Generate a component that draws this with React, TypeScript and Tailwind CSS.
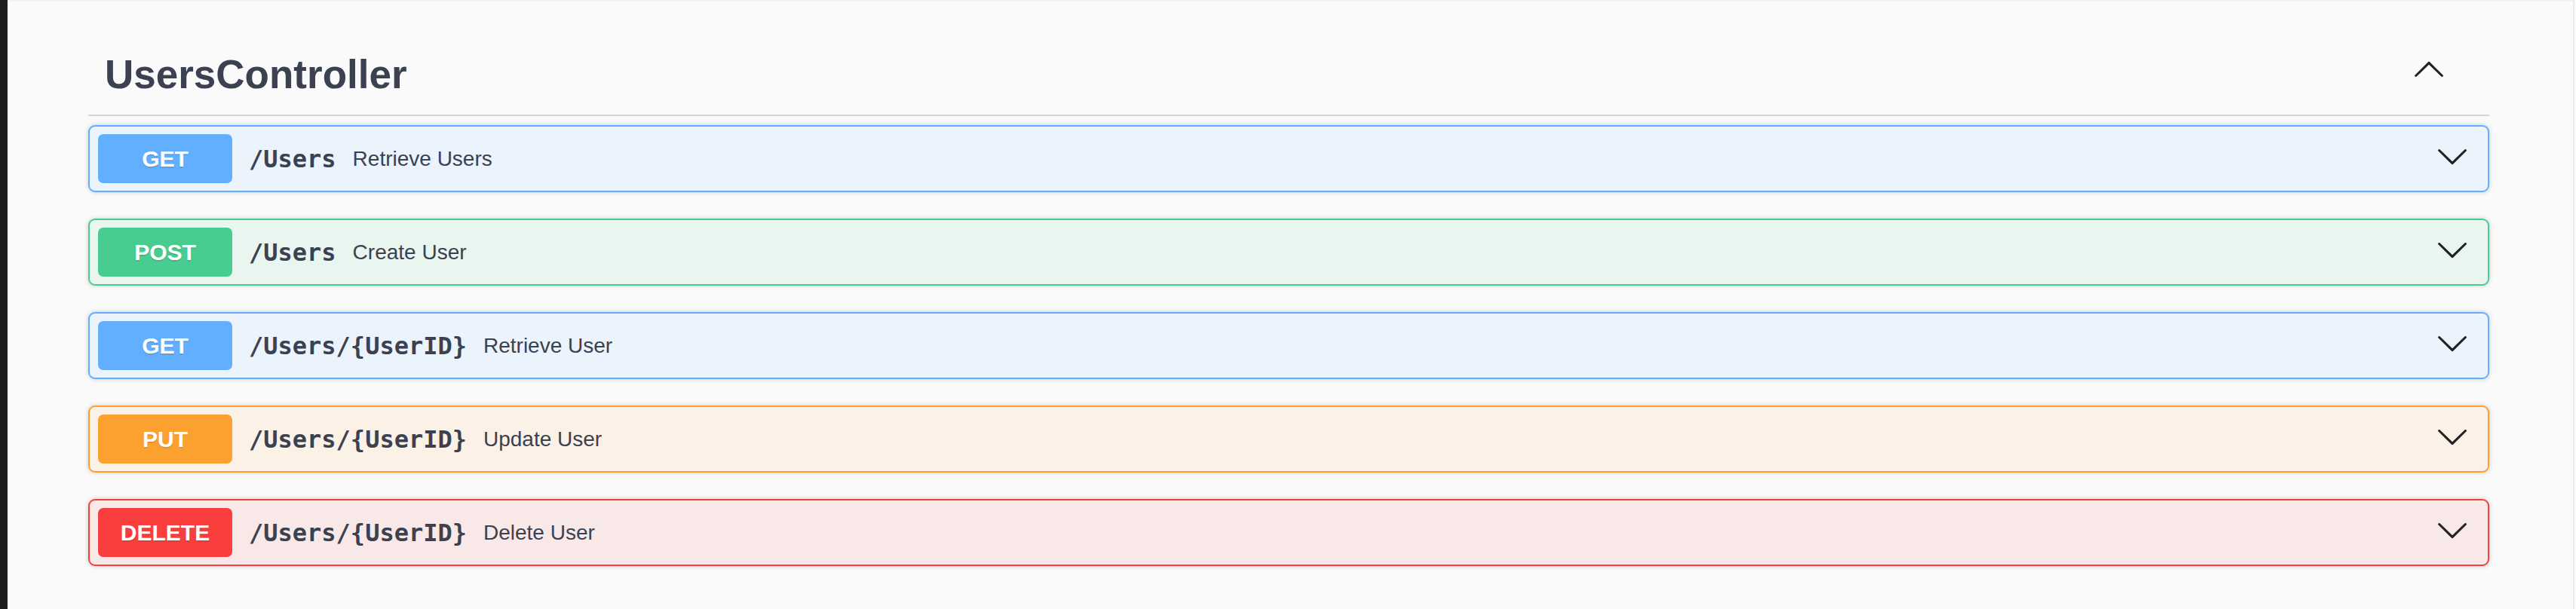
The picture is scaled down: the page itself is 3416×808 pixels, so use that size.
import React from "react";

type Op = {
  method: string;
  path: string;
  desc: string;
  rowCls: string;
  badgeCls: string;
};

const ops: Op[] = [
  {
    method: "GET",
    path: "/Users",
    desc: "Retrieve Users",
    rowCls: "bg-[#ebf3fc] border-[#61affe]",
    badgeCls: "bg-[#61affe]",
  },
  {
    method: "POST",
    path: "/Users",
    desc: "Create User",
    rowCls: "bg-[#e8f6ef] border-[#49cc90]",
    badgeCls: "bg-[#49cc90]",
  },
  {
    method: "GET",
    path: "/Users/{UserID}",
    desc: "Retrieve User",
    rowCls: "bg-[#ebf3fc] border-[#61affe]",
    badgeCls: "bg-[#61affe]",
  },
  {
    method: "PUT",
    path: "/Users/{UserID}",
    desc: "Update User",
    rowCls: "bg-[#fbf1e6] border-[#fca130]",
    badgeCls: "bg-[#fca130]",
  },
  {
    method: "DELETE",
    path: "/Users/{UserID}",
    desc: "Delete User",
    rowCls: "bg-[#f9e8e8] border-[#f93e3e]",
    badgeCls: "bg-[#f93e3e]",
  },
];

const Arrow = ({ up = false }: { up?: boolean }) => (
  <svg
    width="44"
    height="44"
    viewBox="0 0 20 20"
    className={up ? "rotate-180" : ""}
    fill="#222"
  >
    <path d="M17.418 6.109c.272-.268.709-.268.979 0s.271.701 0 .969l-7.908 7.83c-.27.268-.707.268-.979 0l-7.908-7.83c-.27-.268-.27-.701 0-.969.271-.268.709-.268.979 0L10 13.25l7.418-7.141z" />
  </svg>
);

export default function App() {
  return (
    <div className="w-[3416px] h-[808px] bg-[#fafafa] flex font-['Liberation_Sans',Arial,sans-serif]">
      <div className="w-[10px] h-full bg-[#1e1e1e] shrink-0" />
      <div className="flex-1 flex flex-col pl-[107px] pr-[111px] pt-[44px] border-t-2 border-[#f2f2f2]">
        <div className="h-[108px] flex items-center justify-between border-b-2 border-[#d4d5d8] pl-[22px] pr-[58px]">
          <h3 className="text-[53px] leading-[60px] font-bold text-[#3b4151]">UsersController</h3>
          <div className="mb-[12px]">
            <Arrow up />
          </div>
        </div>
        <div className="flex flex-col gap-[35px] mt-[12px]">
          {ops.map((op, i) => (
            <div
              key={i}
              className={`h-[89px] border-2 rounded-[9px] shadow-[0_0_6px_rgba(0,0,0,0.19)] flex items-center px-[11px] ${op.rowCls}`}
            >
              <div
                className={`w-[178px] h-[65px] rounded-[7px] flex items-center justify-center text-white font-bold text-[30px] [text-shadow:0_2px_0_rgba(0,0,0,0.1)] ${op.badgeCls}`}
              >
                {op.method}
              </div>
              <span className="px-[22px] font-['DejaVu_Sans_Mono',monospace] font-bold text-[32px] text-[#3b4151]">
                {op.path}
              </span>
              <span className="text-[28px] text-[#3b4151]">{op.desc}</span>
              <div className="ml-auto mr-[14px] mb-[8px]">
                <Arrow />
              </div>
            </div>
          ))}
        </div>
      </div>
      <div className="w-[2px] h-full bg-[#ececec] shrink-0 mr-[2px]" />
    </div>
  );
}
